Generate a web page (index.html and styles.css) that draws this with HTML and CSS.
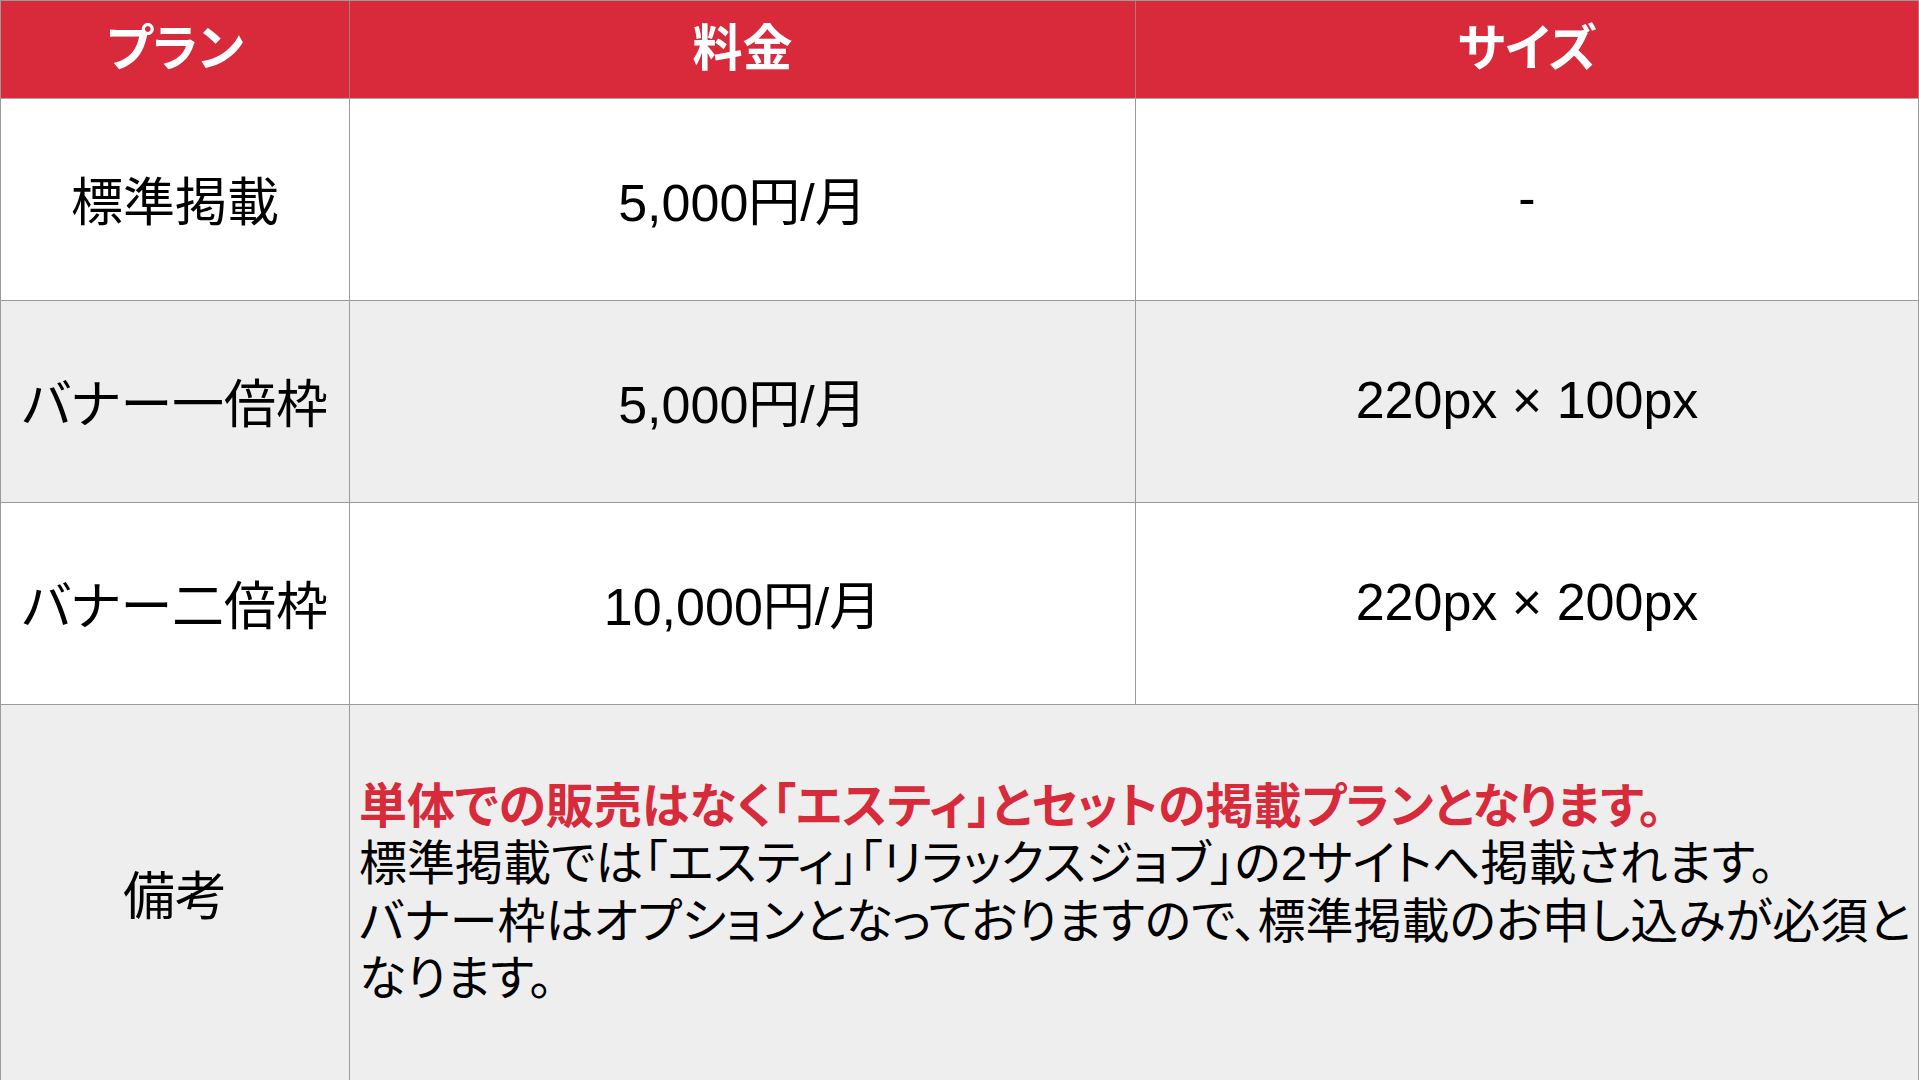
FILE: index.html
```html
<!DOCTYPE html>
<html lang="ja">
<head>
<meta charset="utf-8">
<title>プラン</title>
<link rel="stylesheet" href="styles.css">
</head>
<body>
<div class="table">
  <div class="cell head">プラン</div>
  <div class="cell head">料金</div>
  <div class="cell head">サイズ</div>

  <div class="cell">標準掲載</div>
  <div class="cell">5,000円/月</div>
  <div class="cell">-</div>

  <div class="cell alt">バナー一倍枠</div>
  <div class="cell alt">5,000円/月</div>
  <div class="cell alt">220px × 100px</div>

  <div class="cell">バナー二倍枠</div>
  <div class="cell">10,000円/月</div>
  <div class="cell">220px × 200px</div>

  <div class="cell alt note-label">備考</div>
  <div class="cell alt note">
    <p class="line red">単体での販売はなく「エスティ」とセットの掲載プランとなります。</p>
    <p class="line">標準掲載では「エスティ」「リラックスジョブ」の2サイトへ掲載されます。</p>
    <p class="line">バナー枠はオプションとなっておりますので、標準掲載のお申し込みが必須と</p>
    <p class="line">なります。</p>
  </div>
</div>
</body>
</html>
```

FILE: styles.css
```css
* { box-sizing: border-box; }
html, body {
  margin: 0;
  padding: 0;
  background: #ffffff;
  overflow: hidden;
}
body {
  width: 1919px;
  height: 1080px;
  font-family: "Liberation Sans", "Noto Sans CJK JP", sans-serif;
  color: #000;
}
.table {
  display: grid;
  grid-template-columns: 349px 786px 1fr;
  grid-template-rows: 98px 202px 202px 202px 380px;
  border-left: 1px solid #9a9a9a;
  border-top: 1px solid #9a9a9a;
  width: 1919px;
}
.cell {
  display: flex;
  align-items: center;
  justify-content: center;
  border-right: 1px solid #9a9a9a;
  border-bottom: 1px solid #9a9a9a;
  font-size: 52px;
  font-feature-settings: "palt";
  background: #ffffff;
  white-space: nowrap;
  padding-bottom: 3px;
}
.head {
  background: #d82a3b;
  color: #ffffff;
  font-weight: bold;
  font-size: 50px;
  padding-bottom: 12px;
  border-right-color: #b8737a;
  border-bottom-color: #a9a9a9;
}
.alt { background: #eeeeee; }
.note-label { padding-bottom: 4px; }
.note {
  grid-column: 2 / 4;
  flex-direction: column;
  align-items: flex-start;
  justify-content: center;
  padding-left: 9px;
  padding-bottom: 4px;
}
.line {
  margin: 0;
  font-size: 48px;
  line-height: 57.5px;
  font-feature-settings: "palt";
}
.red {
  color: #d72a3a;
  font-weight: bold;
}
```
